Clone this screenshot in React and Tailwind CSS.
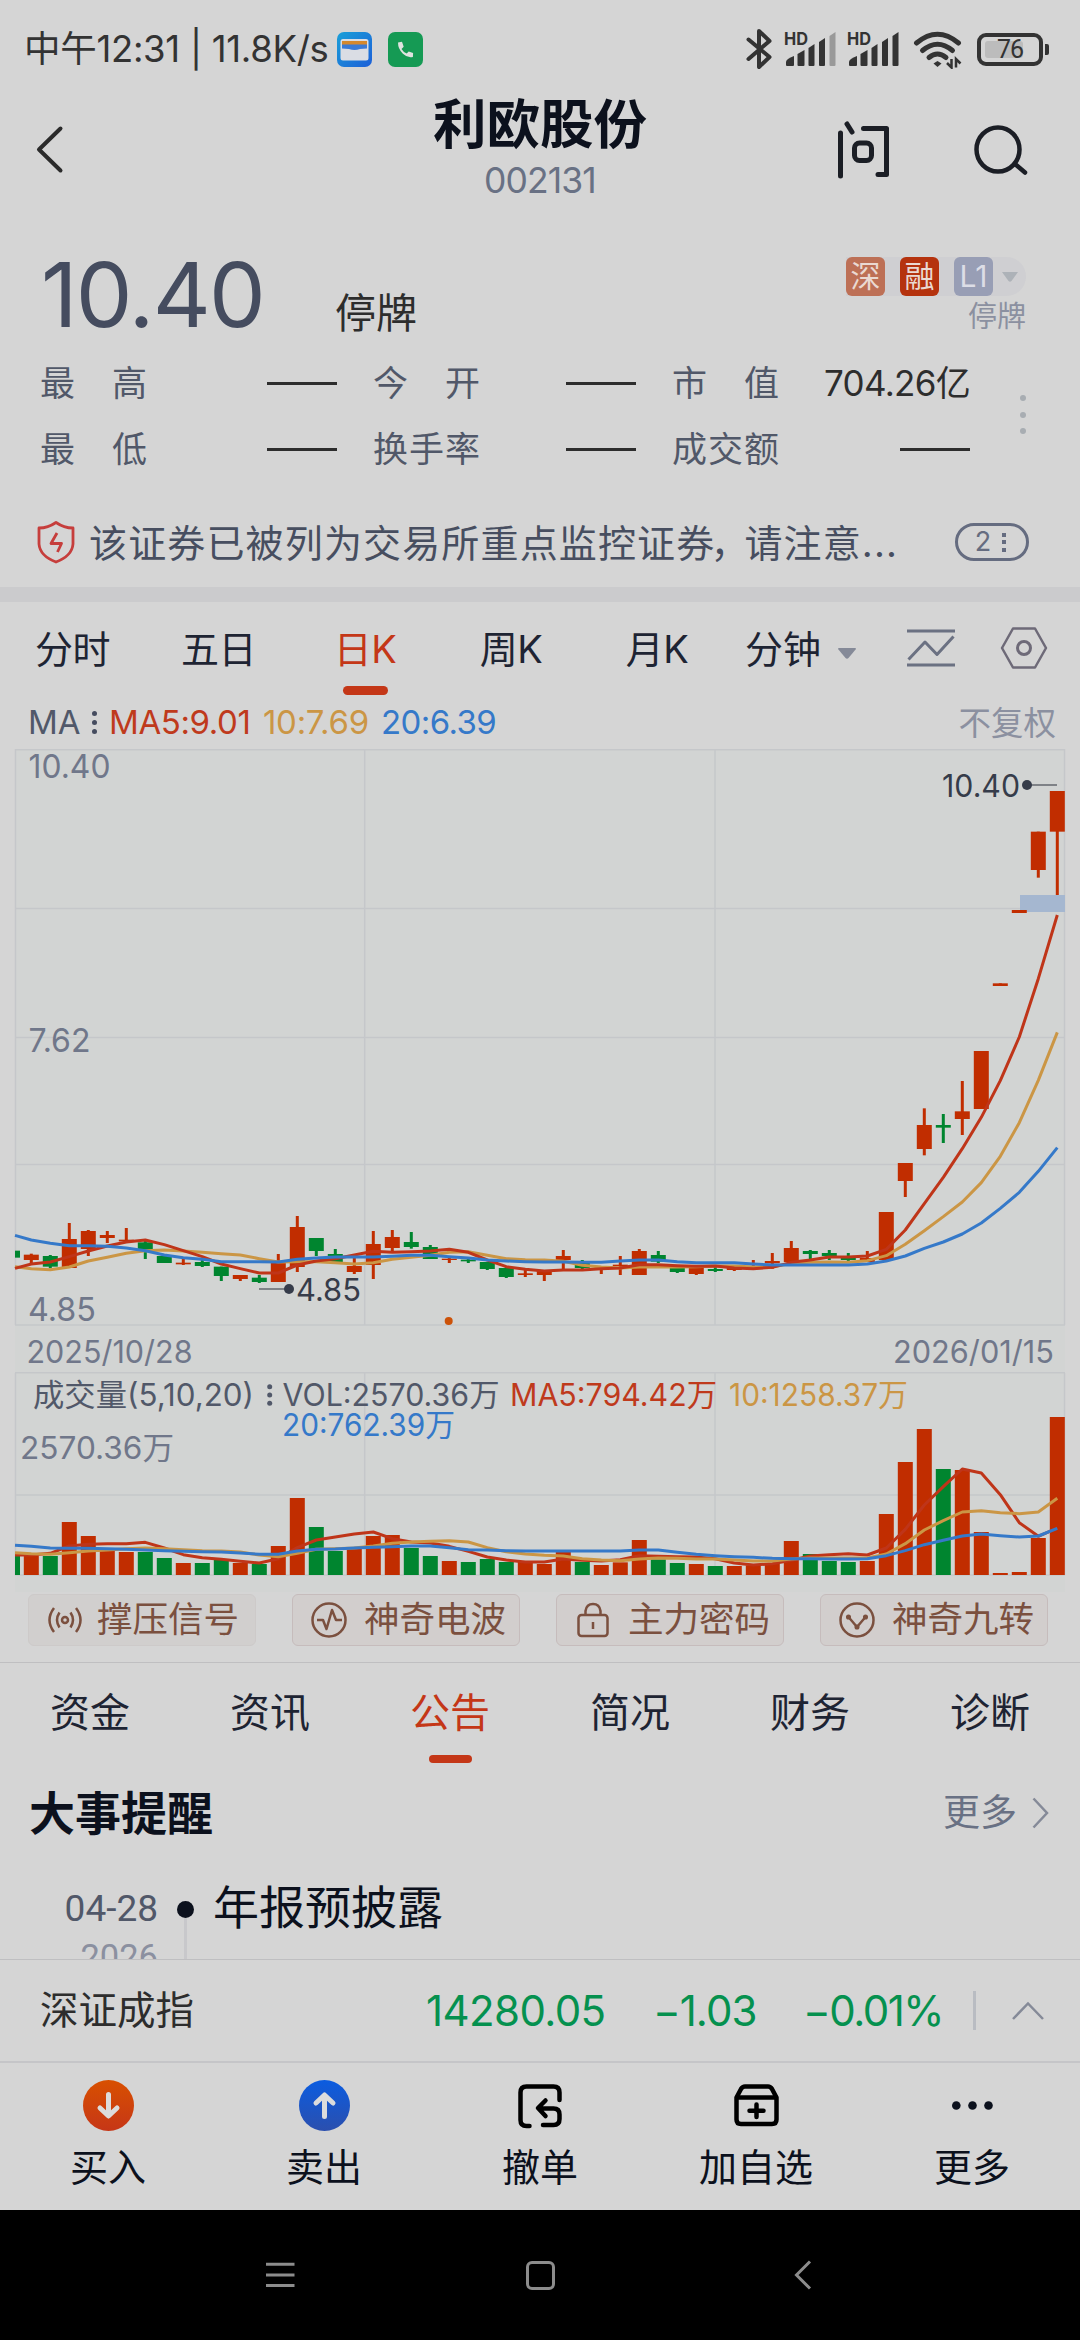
import React from 'react';
import clsx from 'clsx';

const FIRST_X = 31.3;
const STEP = 19;
const BAR_W = 15;
const RED = '#c12d00';
const GREEN = '#00852f';

// price values are thirds of a pixel measured from y=1180
const toY = (v) => 1180 + v / 3;

// [up, bodyTop, bodyBottom, wickTop, wickBottom]
const candles = [
  [1, 224, 240, 221, 250],
  [0, 228, 260, 225, 265],
  [1, 177, 264, 129, 264],
  [1, 153, 207, 150, 228],
  [1, 165, 174, 153, 189],
  [1, 179, 184, 144, 186],
  [0, 187, 212, 180, 237],
  [0, 228, 249, 228, 249],
  [1, 248, 253, 234, 255],
  [0, 246, 258, 240, 261],
  [0, 260, 288, 260, 303],
  [1, 285, 297, 285, 303],
  [0, 293, 306, 285, 309],
  [1, 249, 306, 222, 306],
  [1, 141, 261, 108, 276],
  [0, 174, 213, 174, 228],
  [0, 222, 246, 207, 246],
  [1, 258, 276, 234, 282],
  [1, 192, 255, 153, 297],
  [1, 171, 204, 150, 213],
  [0, 186, 201, 156, 206],
  [0, 201, 237, 195, 237],
  [1, 236, 240, 231, 249],
  [0, 239, 244, 236, 249],
  [0, 246, 267, 246, 270],
  [0, 264, 291, 261, 294],
  [1, 280, 285, 270, 291],
  [1, 273, 285, 270, 303],
  [1, 228, 240, 210, 270],
  [0, 246, 264, 240, 267],
  [1, 264, 269, 258, 282],
  [1, 254, 258, 228, 285],
  [1, 213, 285, 207, 285],
  [0, 225, 245, 213, 249],
  [0, 261, 276, 261, 279],
  [1, 260, 282, 260, 285],
  [0, 267, 273, 261, 276],
  [1, 262, 270, 262, 273],
  [1, 250, 255, 240, 262],
  [1, 243, 250, 219, 267],
  [1, 204, 246, 183, 246],
  [0, 213, 222, 210, 237],
  [0, 219, 228, 210, 240],
  [0, 233, 240, 219, 246],
  [1, 234, 246, 213, 246],
  [1, 96, 240, 96, 240],
  [1, -51, 3, -51, 51],
  [1, -165, -93, -215, -74],
  [0, -165, -157, -198, -111],
  [1, -206, -183, -297, -135],
  [1, -387, -213, -387, -213],
  [1, -590, -582, -590, -582],
  [1, -810, -801, -810, -801],
  [1, -1045, -930, -1045, -907],
  [1, -1167, -1045, -1167, -855],
];

// the first point of every line sits on the left edge of the chart
const priceLines = [
  {
    color: '#cb9645',
    data: [260, 266, 269, 261, 243, 232, 220, 212, 210, 213, 217, 221, 225, 236, 246, 245, 245, 248, 252, 248, 238, 232, 226, 217, 215, 226, 236, 239,
      240, 244, 256, 261, 264, 261, 261, 261, 260, 258, 258, 261, 261, 250, 247, 246, 247, 242, 227, 193, 152, 110, 66, 8, -71, -172, -299, -443],
  },
  {
    color: '#bf3519',
    data: [265, 252, 246, 230, 213, 198, 186, 180, 194, 212, 230, 252, 266, 279, 279, 255, 243, 236, 225, 214, 217, 215, 213, 208, 217, 240, 260, 268,
      273, 270, 270, 266, 264, 254, 254, 257, 259, 258, 264, 266, 262, 247, 240, 231, 231, 228, 208, 150, 71, -8, -94, -188, -298, -429, -604, -795],
  },
  {
    color: '#3579c9',
    data: [166, 180, 190, 197, 197, 199, 204, 212, 225, 233, 238, 245, 245, 245, 246, 238, 234, 231, 231, 231, 229, 226, 226, 230, 234, 240, 243, 245,
      246, 246, 247, 247, 243, 240, 240, 245, 248, 248, 248, 252, 255, 255, 255, 255, 255, 252, 243, 228, 205, 186, 162, 129, 85, 37, -26, -97],
  },
];

const volumeTops = [1125, 1128, 1026, 1068, 1113, 1116, 1116, 1134, 1149, 1149, 1140, 1149, 1152, 1098, 954, 1041, 1113, 1107, 1068, 1065, 1104, 1128, 1143, 1146, 1137, 1146, 1146,
  1152, 1116, 1146, 1155, 1147, 1080, 1138, 1149, 1152, 1158, 1158, 1156, 1149, 1083, 1122, 1143, 1146, 1143, 1002, 846, 747, 867, 870, 1056, 1179, 1176, 1074, 711];

const volumeLines = [
  {
    color: '#bf3519',
    data: [1125, 1125, 1120, 1098, 1093, 1091, 1091, 1087, 1104, 1124, 1133, 1138, 1144, 1149, 1136, 1103, 1080, 1071, 1062, 1056, 1076, 1086, 1089, 1099, 1114, 1131, 1140, 1146,
      1146, 1137, 1141, 1143, 1139, 1127, 1129, 1130, 1131, 1136, 1149, 1155, 1151, 1141, 1128, 1124, 1121, 1125, 1104, 1048, 975, 920, 867, 879, 944, 1028, 1069, 1044],
  },
  {
    color: '#cb9645',
    data: [1118, 1121, 1123, 1118, 1113, 1110, 1106, 1104, 1106, 1109, 1112, 1113, 1116, 1125, 1130, 1120, 1108, 1106, 1104, 1098, 1090, 1086, 1084, 1082, 1086, 1103, 1115, 1122,
      1126, 1128, 1136, 1140, 1142, 1137, 1134, 1135, 1137, 1137, 1140, 1143, 1143, 1137, 1134, 1134, 1134, 1134, 1122, 1091, 1050, 1022, 996, 992, 998, 1001, 996, 955],
  },
  {
    color: '#3579c9',
    data: [1096, 1099, 1104, 1105, 1105, 1106, 1108, 1110, 1112, 1114, 1115, 1116, 1119, 1123, 1123, 1113, 1108, 1107, 1104, 1102, 1100, 1098, 1098, 1103, 1109, 1110, 1112, 1113,
      1113, 1113, 1113, 1113, 1113, 1110, 1110, 1117, 1123, 1127, 1130, 1132, 1135, 1136, 1136, 1137, 1137, 1136, 1127, 1112, 1094, 1081, 1068, 1062, 1067, 1071, 1068, 1045],
  },
];

const linePoints = (data) =>
  data.map((v, i) => `${i === 0 ? 15 : FIRST_X + (i - 1) * STEP},${toY(v)}`).join(' ');

const Signal = ({ weak }) => (
  <svg className="h-[40px] w-[52px]" viewBox="0 0 52 40" fill="#333">
    <text x="0" y="16" fontSize="17.500" fontWeight="700" textLength="24" lengthAdjust="spacingAndGlyphs">HD</text>
    <path d="M2 36v-3q0-3 8-6v9q0 1-1 1H3q-1 0-1-1Z" />
    <path d="M13.500 36v-11l7-4v15q0 1-1 1h-5q-1 0-1-1Z" />
    <path d="M24.500 36v-17l6-4v21q0 1-1 1h-4q-1 0-1-1Z" />
    <path d="M35 36v-23l6-4v27q0 1-1 1h-4q-1 0-1-1Z" />
    <path d="M45.500 36v-29l6-4v33q0 1-1 1h-4q-1 0-1-1Z" fill={weak ? '#999' : '#333'} />
  </svg>
);

const StatusBar = () => (
  <div className="flex h-[95px] items-center pt-[3px] pl-[24px] text-[#333]">
    <span className="w-[313px] whitespace-nowrap text-[36.500px] leading-[40px] tracking-[-0.3px]">中午12:31 | 11.8K/s</span>
    <svg className="h-[35px] w-[35px]" viewBox="0 0 35 35">
      <defs>
        <linearGradient id="wallet" x1="0" y1="0" x2="1" y2="1">
          <stop offset="0" stopColor="#1aa0d8" />
          <stop offset="1" stopColor="#1c5fd8" />
        </linearGradient>
      </defs>
      <rect width="35" height="35" rx="7" fill="url(#wallet)" />
      <rect x="3.500" y="7" width="28" height="21.500" rx="2.500" fill="#dadde4" />
      <rect x="5" y="9" width="25" height="4" fill="#d6892c" />
      <path d="M5 12.500h25v4l-7 .5q-5.500 2-11 0l-7-.5Z" fill="#3a7bd6" />
    </svg>
    <svg className="ml-[16px] h-[35px] w-[35px]" viewBox="0 0 35 35">
      <rect width="35" height="35" rx="7" fill="#159a54" />
      <path d="M10 10.500l4-.7 1.700 5-2.200 2.200q2 3.300 5.200 4.600l2-2 4.400 1.400-.2 4q-5 1.500-10-3.200-5-5-4.900-11.300Z" fill="#dfe3e0" />
    </svg>
    <div className="ml-auto flex items-center pr-[31px]">
      <svg className="mr-[11px] h-[42px] w-[28px]" viewBox="0 0 28 42" fill="none" stroke="#333" strokeWidth="4" strokeLinejoin="round" strokeLinecap="round">
        <path d="M3.500 11.500 24.500 29 14 39V3l10.500 10L3.500 31" />
      </svg>
      <Signal weak />
      <div className="w-[11px]" />
      <Signal />
      <svg className="ml-[14px] h-[40px] w-[50px]" viewBox="0 0 50 40" fill="none" stroke="#333" strokeWidth="5" strokeLinecap="round">
        <path d="M3.500 14q21-17.500 42 0" />
        <path d="M9.500 21.500q15-12.500 30 0" />
        <path d="M16 28.500q8.500-7 17 0" />
        <path d="M24.500 32l4 2.500-4 3.500-4-3.500Z" fill="#333" stroke="none" />
        <path d="M38.500 30v8.500l-4.500-4.500M43 38.500v-8.500l4.500 4.500" strokeWidth="2.500" strokeLinecap="butt" />
      </svg>
      <div className="ml-[14px] flex h-[33px] w-[66px] items-center rounded-[9px] border-4 border-[#333] p-[4px]">
        <div className="flex h-full w-[38px] items-center rounded-[3px] bg-[#bcbcbc] font-['Roboto',sans-serif]">
          <span className="ml-[12px] text-[25px] leading-none tracking-[-1px]">76</span>
        </div>
      </div>
      <div className="ml-[2px] h-[11px] w-[4px] rounded-r-[2px] bg-[#333]" />
    </div>
  </div>
);

const Header = () => (
  <div className="flex h-[110px] items-center pb-[1px]">
    <svg className="ml-[34px] h-[50px] w-[30px]" viewBox="0 0 30 50" fill="none" stroke="#2b2b2b" strokeWidth="4" strokeLinecap="round" strokeLinejoin="round">
      <path d="M26.500 3.500 5 24.500 26.500 45.500" />
    </svg>
    <div className="ml-[326px] w-[300px] text-center">
      <div className="text-[53.500px] font-bold leading-[56px] text-[#0c111d]">利欧股份</div>
      <div className="mt-[6px] text-[35.500px] leading-[44px] tracking-[-0.9px] text-[#697184]">002131</div>
    </div>
    <svg className="ml-[144px] h-[60px] w-[58px]" viewBox="0 0 58 60" fill="none" stroke="#1b1e25" strokeWidth="5" strokeLinecap="round" strokeLinejoin="round">
      <path d="M6.500 13v43" />
      <path d="M13 4l5 8" />
      <path d="M29.500 8.500h23v46H44" />
      <rect x="20.500" y="23" width="17" height="17.500" rx="5" />
    </svg>
    <svg className="ml-[79px] h-[60px] w-[60px]" viewBox="0 0 60 60" fill="none" stroke="#1b1e25" strokeWidth="4.500" strokeLinecap="round">
      <ellipse cx="27" cy="29.500" rx="21.500" ry="22" />
      <path d="M44 44 54 52.500" />
    </svg>
  </div>
);

const Quote = () => (
  <div className="flex h-[145px] items-start pl-[41px] pr-[54px]">
    <div className="mt-[45px] w-[294px] whitespace-nowrap text-[90px] leading-[90px] tracking-[-1.800px] text-[#454c5f]">10.40</div>
    <div className="mt-[87px] text-[41px] leading-[42px] text-[#2d2d2d]">停牌</div>
    <div className="ml-auto mt-[52px] flex flex-col items-end">
      <div className="flex h-[39px] w-[180px] items-center rounded-r-full bg-[#cfcfd2] text-[30px] text-[#ead9d2]">
        <span className="h-[39px] w-[39px] rounded-[6px] bg-[#bd7056] text-center leading-[38px]">深</span>
        <span className="ml-[15px] h-[39px] w-[39px] rounded-[6px] bg-[#b5330e] text-center leading-[38px]">融</span>
        <span className="ml-[15px] h-[39px] w-[39px] rounded-[6px] bg-[#989eb5] text-center leading-[38px] text-[#dcdde6]">L1</span>
        <svg className="ml-[9px] h-[10px] w-[16px]" viewBox="0 0 16 10">
          <path d="M0 0h16L9.500 9q-1.500 1.500-3 0Z" fill="#adb2b8" />
        </svg>
      </div>
      <div className="mt-[5px] text-[29px] leading-[32px] text-[#8b90a0]">停牌</div>
    </div>
  </div>
);

const statRows = [
  [['最高', null], ['今开', null], ['市值', '704.26亿']],
  [['最低', null], ['换手率', null], ['成交额', null]],
];

const Stats = () => (
  <div className="flex h-[132px] items-center pl-[40px]">
    <div className="w-[930px]">
      {statRows.map((row, i) => (
        <div key={i} className="grid h-[66px] grid-cols-[297px_263px_298px] items-center justify-between">
          {row.map(([label, value]) => (
            <div key={label} className="flex items-center justify-between">
              <div className="flex w-[107px] justify-between text-[35px] leading-[40px] text-[#515869]">
                {label.split('').map((ch) => (
                  <span key={ch}>{ch}</span>
                ))}
              </div>
              {value ? (
                <span className="whitespace-nowrap text-[35px] leading-[40px] tracking-[-0.700px] text-[#2d2d2d]">{value}</span>
              ) : (
                <span className="h-[3px] w-[70px] bg-[#2d2d2d]" />
              )}
            </div>
          ))}
        </div>
      ))}
    </div>
    <div className="ml-[50px] flex flex-col gap-[10.500px] pb-[3px]">
      <span className="h-[6px] w-[6px] rounded-full bg-[#a8adb2]" />
      <span className="h-[6px] w-[6px] rounded-full bg-[#a8adb2]" />
      <span className="h-[6px] w-[6px] rounded-full bg-[#a8adb2]" />
    </div>
  </div>
);

const Notice = () => (
  <div className="flex h-[105px] items-center pl-[37px] pt-[15px]">
    <svg className="h-[44px] w-[38px]" viewBox="0 0 38 44" fill="none" stroke="#c63e3c" strokeWidth="2.800" strokeLinejoin="round">
      <path d="M19 2.500Q11 8 2 8v16q1 12 17 18 16-6 17-18V8q-9 0-17-5.500Z" />
      <path d="M20 13l-6 10.500h10.500L20.500 32" />
    </svg>
    <div className="ml-[14px] w-[841px] whitespace-nowrap pt-[1px] text-[38px] leading-[46px] tracking-[1.150px] text-[#474e60]">
      该证券已被列为交易所重点监控证券<span className="-ml-[5px] tracking-[-4px]">，</span>请注意...
    </div>
    <div className="ml-[25px] flex h-[38px] w-[74px] items-center justify-center gap-[11px] rounded-full border-[3px] border-[#656c80] pr-[3px] text-[27px] text-[#656c80]">
      2
      <span className="flex flex-col gap-[3.500px]">
        <i className="h-[4px] w-[4px] bg-[#656c80]" />
        <i className="h-[4px] w-[4px] bg-[#656c80]" />
        <i className="h-[4px] w-[4px] bg-[#656c80]" />
      </span>
    </div>
  </div>
);

const periods = [
  { name: '分时', width: 'w-[145px]' },
  { name: '五日', width: 'w-[147px]' },
  { name: '日K', width: 'w-[146px]', active: true },
  { name: '周K', width: 'w-[146px]' },
  { name: '月K', width: 'w-[146px]' },
];

const PeriodTabs = () => (
  <div className="flex h-[96px] items-start text-[38px] leading-[44px] text-[#1e2433]">
    {periods.map((p) => (
      <div key={p.name} className={clsx('flex flex-col items-center pt-[25px]', p.width, p.active && 'text-[#c43717]')}>
        <span className="tracking-[-0.500px]">{p.name}</span>
        {p.active && <span className="mt-[15px] h-[9px] w-[45px] rounded-full bg-[#c43717]" />}
      </div>
    ))}
    <span className="ml-[15px] mt-[25px]">分钟</span>
    <svg className="ml-[17px] mt-[46px] h-[11px] w-[18px]" viewBox="0 0 18 11">
      <path d="M0 1q0-1 1-1h16q1 0 1 1l-7.500 9q-1.500 1.500-3 0Z" fill="#858a98" />
    </svg>
    <svg className="ml-[51px] mt-[27px] h-[38px] w-[48px]" viewBox="0 0 48 38" fill="none" stroke="#6b7182" strokeWidth="3">
      <path d="M0 2h48M0 36h48M1.500 30.500 18 13l12 12.500L46.500 7.500" strokeLinejoin="round" />
    </svg>
    <svg className="ml-[45px] mt-[25px] h-[42px] w-[48px]" viewBox="0 0 48 42" fill="none" stroke="#6e6a78" strokeWidth="2.500" strokeLinejoin="round">
      <path d="M13 1.500h22L46 21 35 40.500H13L2 21Z" />
      <circle cx="24" cy="21" r="6.500" strokeWidth="3" />
    </svg>
  </div>
);

const MaLegend = () => (
  <div className="flex h-[51px] items-center whitespace-nowrap pb-[3px] pl-[28px] text-[33px] leading-[40px] text-[#515869]">
    <span className="w-[64px]">MA</span>
    <span className="flex w-[17px] flex-col gap-[4px]">
      <i className="h-[5px] w-[5px] rounded-full bg-[#454c5f]" />
      <i className="h-[5px] w-[5px] rounded-full bg-[#454c5f]" />
      <i className="h-[5px] w-[5px] rounded-full bg-[#454c5f]" />
    </span>
    <span className="w-[154px] tracking-[-0.400px] text-[#bf3a1c]">MA5:9.01</span>
    <span className="w-[118px] tracking-[-0.300px] text-[#cb9645]">10:7.69</span>
    <span className="tracking-[-0.600px] text-[#3579c9]">20:6.39</span>
    <span className="ml-auto pr-[24px] pt-[3px] text-[32.500px] text-[#8b90a0]">不复权</span>
  </div>
);

const Chart = () => (
  <svg className="block h-[843px] w-[1080px] overflow-visible" viewBox="0 749 1080 843" fontFamily="Inter, 'Noto Sans CJK SC', sans-serif">
    <rect x="15" y="749" width="1050" height="843" fill="#d2d4d3" />
    <g stroke="#c5c7ca" strokeWidth="1.500" fill="none">
      <path d="M15 749.750H1065M15 908.500H1065M15 1037.500H1065M15 1164.500H1065M15 1325H1065M15 1372.700H1065M15 1495H1065M15 1575H1065" />
      <path d="M15.500 749V1325M364.700 749V1325M715 749V1325M1064.500 749V1325M15.500 1373V1575M364.700 1373V1575M715 1373V1575M1064.500 1373V1575" />
    </g>

    {/* scale labels */}
    <g fill="#70778a" fontSize="33">
      <text x="28.500" y="778" textLength="82" lengthAdjust="spacingAndGlyphs">10.40</text>
      <text x="28.500" y="1052" textLength="62" lengthAdjust="spacingAndGlyphs">7.62</text>
      <text x="28" y="1321" textLength="68" lengthAdjust="spacingAndGlyphs">4.85</text>
      <text x="26.500" y="1362.500" fontSize="31" textLength="166" lengthAdjust="spacingAndGlyphs">2025/10/28</text>
      <text x="893" y="1362.500" fontSize="31" textLength="161" lengthAdjust="spacingAndGlyphs">2026/01/15</text>
    </g>

    {/* candles */}
    <rect x="1020" y="895" width="45" height="17" fill="#a5b7d0" />
    <rect x="15" y={toY(212)} width="5" height="7" fill={GREEN} />
    {candles.map(([up, top, bottom, high, low], i) => {
      const x = FIRST_X + i * STEP;
      return (
        <g key={i} fill={up ? RED : GREEN}>
          <rect x={x - 1.5} y={toY(high)} width="3" height={(low - high) / 3} />
          <rect x={x - BAR_W / 2} y={toY(top)} width={BAR_W} height={(bottom - top) / 3} />
        </g>
      );
    })}
    {priceLines.map((line) => (
      <polyline key={line.color} points={linePoints(line.data)} fill="none" stroke={line.color} strokeWidth="3" strokeLinejoin="round" />
    ))}
    <circle cx="448.700" cy="1321" r="4" fill="#cc5209" />

    {/* high / low markers */}
    <g fill="#363c4a">
      <path d="M259 1289H286M1030 785H1057" stroke="#7f8287" strokeWidth="2" />
      <circle cx="289" cy="1289" r="5" />
      <circle cx="1027" cy="785" r="5" />
      <text x="296" y="1301" fontSize="31" textLength="65" lengthAdjust="spacingAndGlyphs">4.85</text>
      <text x="942" y="797" fontSize="31" textLength="78" lengthAdjust="spacingAndGlyphs">10.40</text>
    </g>

    {/* volume */}
    <rect x="15" y={toY(1128)} width="5" height="19" fill={GREEN} />
    {volumeTops.map((top, i) => (
      <rect key={i} x={FIRST_X + i * STEP - BAR_W / 2} y={toY(top)} width={BAR_W} height={(1185 - top) / 3} fill={candles[i][0] ? RED : GREEN} />
    ))}
    {volumeLines.map((line) => (
      <polyline key={line.color} points={linePoints(line.data)} fill="none" stroke={line.color} strokeWidth="3" strokeLinejoin="round" />
    ))}
    <g fontSize="30.500" fill="#515869">
      <text x="33" y="1406" textLength="221" lengthAdjust="spacingAndGlyphs">成交量(5,10,20)</text>
      <circle cx="269.700" cy="1386.700" r="2.500" />
      <circle cx="269.700" cy="1395" r="2.500" />
      <circle cx="269.700" cy="1403.300" r="2.500" />
      <text x="282.500" y="1406" textLength="217" lengthAdjust="spacingAndGlyphs">VOL:2570.36万</text>
      <text x="510" y="1406" fill="#bf3a1c" textLength="207" lengthAdjust="spacingAndGlyphs">MA5:794.42万</text>
      <text x="729" y="1406" fill="#cb9645" textLength="179" lengthAdjust="spacingAndGlyphs">10:1258.37万</text>
      <text x="282" y="1436" fill="#3579c9" textLength="173" lengthAdjust="spacingAndGlyphs">20:762.39万</text>
      <text x="20" y="1459" fill="#70778a" textLength="154" lengthAdjust="spacingAndGlyphs">2570.36万</text>
    </g>
  </svg>
);

const chips = [
  {
    name: '撑压信号',
    pad: 'pl-[18px] gap-[14px] border-[#cdcac9] bg-[#d1cfce]',
    icon: (
      <>
        <circle cx="18" cy="18" r="3" />
        <path d="M12.500 10.500q-5 7.500 0 15M23.500 10.500q5 7.500 0 15M7 6q-9 12 0 24M29 6q9 12 0 24" />
      </>
    ),
  },
  {
    name: '神奇电波',
    pad: 'pl-[18px] gap-[17px] border-[#c6bcbc] bg-[#d2cecd]',
    icon: (
      <>
        <circle cx="18" cy="18" r="16.500" />
        <path d="M6 18h6l3.500 9 5.500-19 4 10h6" />
      </>
    ),
  },
  {
    name: '主力密码',
    pad: 'pl-[18px] gap-[17px] border-[#c6bcbc] bg-[#d2cecd]',
    icon: (
      <>
        <rect x="3.500" y="13" width="29" height="21" rx="3" />
        <path d="M10.500 13V9q1-7 7.500-7t7.500 7v4M18 20v7" />
      </>
    ),
  },
  {
    name: '神奇九转',
    pad: 'pl-[18px] gap-[17px] border-[#c6bcbc] bg-[#d2cecd]',
    icon: (
      <>
        <circle cx="18" cy="18" r="16.500" />
        <path d="M9.500 15l8.500 10 8.500-10" />
        <circle cx="9.500" cy="15" r="1.300" />
        <circle cx="26.500" cy="15" r="1.300" />
        <circle cx="18" cy="25" r="1.300" />
      </>
    ),
  },
];

const Chips = () => (
  <div className="flex h-[71px] items-start gap-[36px] border-b border-[#bfbfc1] pl-[28px] pt-[2px]">
    {chips.map((chip) => (
      <div key={chip.name} className={clsx('flex h-[52px] w-[228px] items-center whitespace-nowrap rounded-[6px] border text-[35.500px] leading-[44px] text-[#7b503f]', chip.pad)}>
        <svg className="h-[36px] w-[36px] shrink-0" viewBox="0 0 36 36" fill="none" stroke="#7b503f" strokeWidth="2.500" strokeLinejoin="round">
          {chip.icon}
        </svg>
        {chip.name}
      </div>
    ))}
  </div>
);

const InfoTabs = () => (
  <div className="grid h-[112px] grid-cols-6 text-[40px] leading-[46px] text-[#1e2433]">
    {['资金', '资讯', '公告', '简况', '财务', '诊断'].map((name) => (
      <div key={name} className={clsx('flex flex-col items-center pt-[27px]', name === '公告' && 'text-[#c43717]')}>
        <span>{name}</span>
        {name === '公告' && <span className="mt-[19px] h-[8px] w-[43px] rounded-full bg-[#c43717]" />}
      </div>
    ))}
  </div>
);

const Events = () => (
  <div className="h-[184px] overflow-hidden">
    <div className="flex h-[75px] items-center pl-[29px] pr-[30px]">
      <span className="text-[46px] font-bold leading-[50px] text-[#0c111d]">大事提醒</span>
      <span className="ml-auto pt-[1px] text-[37px] text-[#697184]">更多</span>
      <svg className="ml-[15px] h-[32px] w-[18px]" viewBox="0 0 18 32" fill="none" stroke="#858a98" strokeWidth="2.500">
        <path d="M1.500 1.500 15 16 1.500 30.500" />
      </svg>
    </div>
    <div className="flex pl-[60px]">
      <div className="flex w-[98px] flex-col items-end whitespace-nowrap font-['Roboto',sans-serif] leading-[48px] text-[#515869]">
        <div className="mt-[35px] text-[37px]">04-28</div>
        <div className="text-[34.500px] text-[#8b90a0]">2026</div>
      </div>
      <div className="ml-[19px] flex w-[17px] flex-col items-center">
        <span className="mt-[51px] h-[17px] w-[17px] rounded-full bg-[#0c111d]" />
        <span className="h-[60px] w-[3px] bg-[#c8c8cb]" />
      </div>
      <div className="ml-[19px] mt-[31px] text-[46px] leading-[52px] text-[#0c111d]">年报预披露</div>
    </div>
  </div>
);

const IndexBar = () => (
  <div className="flex h-[104px] items-center whitespace-nowrap border-b-2 border-t border-b-[#c5c5c8] border-t-[#bfbfc1] pl-[40px] text-[#05914f]">
    <span className="w-[386px] text-[38.500px] text-[#2d2d2d]">深证成指</span>
    <span className="w-[227px] text-[42px] tracking-[-0.600px]">14280.05</span>
    <span className="w-[150px] text-[42px] tracking-[-1px]">−1.03</span>
    <span className="w-[170px] text-[42px] tracking-[-1.500px]">−0.01%</span>
    <span className="h-[39px] w-[3px] bg-[#b9bcc2]" />
    <svg className="ml-[36px] h-[20px] w-[32px]" viewBox="0 0 32 20" fill="none" stroke="#858a98" strokeWidth="2.500">
      <path d="M1 18 16 2.500 31 18" />
    </svg>
  </div>
);

const Arrow = ({ up }) => (
  <svg className="h-[51px] w-[51px]" viewBox="0 0 51 51">
    <defs>
      <linearGradient id={up ? 'sell' : 'buy'} x1="0" y1="0" x2="0" y2="1">
        <stop offset="0" stopColor={up ? '#0b5ce0' : '#d85000'} />
        <stop offset="1" stopColor={up ? '#2b4fae' : '#c63617'} />
      </linearGradient>
    </defs>
    <circle cx="25.500" cy="25.500" r="25.500" fill={up ? 'url(#sell)' : 'url(#buy)'} />
    <path
      d={up ? 'M25.500 36.500V15.500M17 23l8.500-8 8.500 8' : 'M25.500 14.500V35.500M17 28l8.500 8 8.500-8'}
      fill="none" stroke="#dcdcdc" strokeWidth="5" strokeLinecap="round" strokeLinejoin="round"
    />
  </svg>
);

const navItems = [
  { name: '买入', icon: <Arrow /> },
  { name: '卖出', icon: <Arrow up /> },
  {
    name: '撤单',
    icon: (
      <svg className="h-[51px] w-[51px]" viewBox="0 0 51 51" fill="none" stroke="#000" strokeWidth="4.500" strokeLinecap="round" strokeLinejoin="round">
        <path d="M14.500 46H11.500q-6 0-6-6V12.500q0-6 6-6h27q6 0 6 6V20" />
        <path d="M30.500 20.500 23 28l7.500 8M24 28.500h14.500q6 0 6 6V39q0 6-6 6H28" />
      </svg>
    ),
  },
  {
    name: '加自选',
    icon: (
      <svg className="h-[51px] w-[51px]" viewBox="0 0 51 51" fill="none" stroke="#000" strokeWidth="4.500" strokeLinecap="round" strokeLinejoin="round">
        <path d="M5.500 17.500v22q0 4.500 4.500 4.500h31q4.500 0 4.500-4.500v-22L41 9q-1.500-2.500-4-2.500H14Q11.500 6.500 10 9Z" />
        <path d="M6.500 17.500h38M25.500 24.500v12.500M18.500 30.700h14" />
      </svg>
    ),
  },
  {
    name: '更多',
    icon: (
      <svg className="h-[51px] w-[51px]" viewBox="0 0 51 51" fill="#0c111d">
        <circle cx="9.300" cy="25.500" r="4.300" />
        <circle cx="25.500" cy="25.500" r="4.300" />
        <circle cx="41.500" cy="25.500" r="4.300" />
      </svg>
    ),
  },
];

const BottomNav = () => (
  <div className="grid h-[147px] grid-cols-5 text-[38px] leading-[44px] text-[#0c111d]">
    {navItems.map((item) => (
      <div key={item.name} className="flex flex-col items-center pt-[17px]">
        {item.icon}
        <span className="mt-[14px]">{item.name}</span>
      </div>
    ))}
  </div>
);

const SystemNav = () => (
  <div className="flex h-[130px] items-center bg-black">
    <svg className="ml-[266px] h-[30px] w-[29px]" viewBox="0 0 29 30" stroke="#8c8c8c" strokeWidth="3">
      <path d="M0 4.300h28.500M0 15h28.500M0 25.600h28.500" />
    </svg>
    <span className="ml-[231px] h-[29px] w-[29px] rounded-[6px] border-[3px] border-[#8c8c8c]" />
    <svg className="ml-[239px] h-[30px] w-[18px]" viewBox="0 0 18 30" fill="none" stroke="#8c8c8c" strokeWidth="3">
      <path d="M16 1.500 2.500 15 16 28.500" />
    </svg>
  </div>
);

const App = () => {
  return (
    <div className="h-[2340px] w-[1080px] overflow-hidden bg-[#d5d5d5] font-['Inter','Noto_Sans_CJK_SC',sans-serif]">
      <StatusBar />
      <Header />
      <Quote />
      <Stats />
      <Notice />
      <div className="h-[15px] bg-[#cbcbcd]" />
      <PeriodTabs />
      <MaLegend />
      <Chart />
      <Chips />
      <InfoTabs />
      <Events />
      <IndexBar />
      <BottomNav />
      <SystemNav />
    </div>
  );
};

export default App;
